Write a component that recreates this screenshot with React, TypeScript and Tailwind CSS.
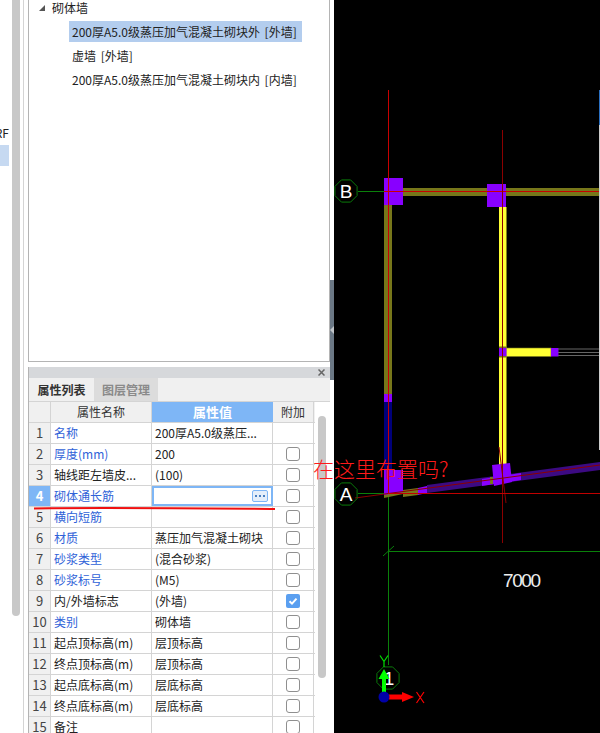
const cjk = "font-['Noto_Sans_CJK_SC','Noto_Sans','Liberation_Sans',sans-serif]"

const rows = [
  { no: 1, name: '名称', value: '200厚A5.0级蒸压...', link: true, box: 'none' },
  { no: 2, name: '厚度(mm)', value: '200', link: true, box: 'off' },
  { no: 3, name: '轴线距左墙皮...', value: '(100)', link: false, box: 'off' },
  { no: 4, name: '砌体通长筋', value: '', link: true, box: 'off', active: true },
  { no: 5, name: '横向短筋', value: '', link: true, box: 'off' },
  { no: 6, name: '材质', value: '蒸压加气混凝土砌块', link: true, box: 'off' },
  { no: 7, name: '砂浆类型', value: '(混合砂浆)', link: true, box: 'off' },
  { no: 8, name: '砂浆标号', value: '(M5)', link: true, box: 'off' },
  { no: 9, name: '内/外墙标志', value: '(外墙)', link: false, box: 'on' },
  { no: 10, name: '类别', value: '砌体墙', link: true, box: 'off' },
  { no: 11, name: '起点顶标高(m)', value: '层顶标高', link: false, box: 'off' },
  { no: 12, name: '终点顶标高(m)', value: '层顶标高', link: false, box: 'off' },
  { no: 13, name: '起点底标高(m)', value: '层底标高', link: false, box: 'off' },
  { no: 14, name: '终点底标高(m)', value: '层底标高', link: false, box: 'off' },
  { no: 15, name: '备注', value: '', link: false, box: 'off' },
]

function Row({ row }: { row: (typeof rows)[number] }) {
  return (
    <div className="flex h-[21px] shrink-0 border-b border-[#d4d4d4] text-[12px] leading-[20px]">
      <div
        className={`w-[22px] shrink-0 border-r border-[#d4d4d4] text-center text-[13px] ${
          row.active ? 'bg-[#7eb6f6] font-bold text-white' : 'bg-[#f0f0f0] text-[#444]'
        }`}
      >
        {row.no}
      </div>
      <div className={`w-[101px] shrink-0 border-r border-[#d4d4d4] pl-[3px] ${row.link ? 'text-[#2f62d8]' : 'text-[#222]'}`}>
        {row.name}
      </div>
      {row.active ? (
        <div className="flex w-[121px] shrink-0 items-center justify-end border-2 border-[#7eb6f6] pr-[3px]">
          <div className="flex h-[12px] w-[16px] items-center justify-center gap-[2px] rounded-[2px] border border-[#7eb6f6] bg-[#e4eefa]">
            <div className="h-[2px] w-[2px] bg-[#4a7fc0]" />
            <div className="h-[2px] w-[2px] bg-[#4a7fc0]" />
            <div className="h-[2px] w-[2px] bg-[#4a7fc0]" />
          </div>
        </div>
      ) : (
        <div className="w-[121px] shrink-0 truncate border-r border-[#d4d4d4] pl-[3px] text-[#222]">{row.value}</div>
      )}
      <div className="flex w-[41px] shrink-0 items-center justify-center border-r border-[#d4d4d4]">
        {row.box === 'off' && <div className="h-[14px] w-[14px] rounded-[3px] border border-[#8f8f8f] bg-white" />}
        {row.box === 'on' && (
          <div className="flex h-[14px] w-[14px] items-center justify-center rounded-[2px] bg-[#5a9ff0]">
            <svg width="10" height="10" viewBox="0 0 10 10" fill="none" stroke="white" strokeWidth="2">
              <path d="M1.5 5.2 4 7.6 8.5 2.6" />
            </svg>
          </div>
        )}
      </div>
    </div>
  )
}

function Octagon({ cx, cy }: { cx: number; cy: number }) {
  const r = 12
  const pts = Array.from({ length: 8 }, (_, i) => {
    const a = (Math.PI / 4) * i + Math.PI / 8
    return `${cx + r * Math.cos(a)},${cy + r * Math.sin(a)}`
  }).join(' ')
  return <polygon points={pts} fill="none" stroke="#0a7a0a" strokeWidth="1" />
}

// drawn in page coordinates, the canvas starts at x=334
function CadDrawing() {
  return (
    <svg width="266" height="733" viewBox="334 0 266 733" className="block">
      {/* axis lines */}
      <path d="M358 191.5H384M358 493.5H388M388.500 493V665M388 551.5H600M383 556 394 546" stroke="#0a800a" fill="none" />
      {/* top wall */}
      <rect x="403" y="188" width="197" height="8" fill="#77771a" />
      {/* left wall */}
      <rect x="384" y="205" width="8" height="189" fill="#77771a" />
      <rect x="384" y="394" width="8" height="8" fill="#8800ff" />
      <rect x="384" y="402" width="8" height="68" fill="#00007a" />
      {/* yellow wall */}
      <rect x="499" y="207" width="7.5" height="258" fill="#ffff33" />
      <rect x="506" y="348" width="45" height="8.5" fill="#ffff33" stroke="#77771a" strokeWidth="0.6" />
      <rect x="499" y="346.5" width="7.5" height="1.5" fill="#77771a" />
      <rect x="499" y="356" width="7.5" height="1.5" fill="#77771a" />
      <rect x="499" y="348" width="7.5" height="8" fill="#8800ff" />
      <rect x="551" y="348" width="7.5" height="8.5" fill="#8800ff" />
      <path d="M558 349H600M558 352.5H600M558 355.5H600" stroke="#666" fill="none" />
      {/* sloped wall */}
      <polygon points="427,485 600,462 600,470 427,493" fill="#3c0a82" />
      <polygon points="403,490 418,488 418,495 403,497" fill="#77771a" />
      <polygon points="418,488 427,486 427,493 418,495" fill="#8800ff" />
      <polygon points="482,479 521,473 521,480 482,486" fill="#8800ff" />
      <rect x="490" y="477" width="3" height="7" fill="#77771a" />
      {/* columns */}
      <rect x="384" y="178" width="19" height="27" fill="#8800ff" />
      <rect x="487" y="184" width="19" height="23" fill="#8800ff" />
      <polygon points="384,470 403,470 403,493 384,497" fill="#8800ff" />
      <polygon points="384,495 403,492 403,494 384,498" fill="#77771a" />
      <polygon points="492,465 510,463 512,482 494,486" fill="#8800ff" />
      {/* centre lines */}
      <path d="M388.500 90V493M384 191.500H600" stroke="#c80000" fill="none" />
      <path d="M502.500 130V543M499 447 506 503M355 498 600 465" stroke="#8b0000" fill="none" />
      <path d="M388 493.500H600" stroke="#c00000" fill="none" />
      {/* window edge behind the canvas */}
      <rect x="599" y="90" width="1" height="35" fill="#2a6fc0" />
      <rect x="599" y="125" width="1" height="325" fill="#ccc" />
      {/* axis bubbles */}
      <Octagon cx={346} cy={191} />
      <Octagon cx={346} cy={494} />
      <Octagon cx={388} cy={678} />
      <text x="346" y="198" textAnchor="middle" fontSize="19" fill="#fff" fontFamily="Liberation Sans, sans-serif">B</text>
      <text x="346" y="501" textAnchor="middle" fontSize="19" fill="#fff" fontFamily="Liberation Sans, sans-serif">A</text>
      <text x="389" y="685" textAnchor="middle" fontSize="19" fill="#fff" fontFamily="Liberation Sans, sans-serif">1</text>
      <text x="503" y="587" fontSize="19" fill="#eee" fontFamily="Liberation Sans, sans-serif" textLength="38">7000</text>
      {/* origin */}
      <path d="M384 692V677" stroke="#00ff00" strokeWidth="4" />
      <polygon points="384,669 389.500,679 378.500,679" fill="#00ff00" />
      <path d="M389 697H403" stroke="#ff0000" strokeWidth="5" />
      <polygon points="414,697 402,692 402,702" fill="#ff0000" />
      <circle cx="384" cy="697" r="5.500" fill="#0000a8" />
      <path d="M416.500 692 424 703M424 692 416.500 703" stroke="#ff0000" strokeWidth="1.200" fill="none" />
      <path d="M380 655.500 384 661.500 388 655.500M384 661.500V667" stroke="#00e000" strokeWidth="1.200" fill="none" />
    </svg>
  )
}

export default function App() {
  return (
    <div className={`relative flex h-[733px] w-[600px] overflow-hidden bg-white ${cjk}`}>
      {/* far left tree, cut off by the window edge */}
      <div className="w-[12px] shrink-0 overflow-hidden bg-white">
        <div className="h-[124px]" />
        <div className="flex h-[18px] justify-end pr-[3px] text-[12px] leading-[18px] whitespace-nowrap text-[#222]">
          <span className="shrink-0">RF</span>
        </div>
        <div className="h-[3px]" />
        <div className="h-[21px] w-[9px] bg-[#c6d9f1]" />
      </div>
      <div className="h-[616px] w-[8px] shrink-0 rounded-b-[4px] bg-[#c8c8c8]" />
      <div className="w-[3px] shrink-0" />
      <div className="w-[1px] shrink-0 bg-[#d4d4d4]" />
      <div className="w-[4px] shrink-0" />

      {/* middle column */}
      <div className="flex w-[302px] shrink-0 flex-col">
        {/* wall tree */}
        <div className="h-[362px] shrink-0 border-r border-b border-l border-[#b4b4b4] bg-white text-[12px] text-[#222] [word-spacing:2px]">
          <div className="flex h-[15px] items-center pl-[10px] leading-[15px]">
            <svg width="6" height="6" viewBox="0 0 6 6" className="mr-[7px]">
              <polygon points="6,0 6,6 0,6" fill="#555" />
            </svg>
            砌体墙
          </div>
          <div className="mt-[6px] ml-[40px] flex h-[21px] w-[233px] items-center bg-[#b3cdee] pl-[3px] whitespace-nowrap">
            200厚A5.0级蒸压加气混凝土砌块外 [外墙]
          </div>
          <div className="mt-[3px] ml-[40px] flex h-[21px] items-center pl-[3px] whitespace-nowrap">虚墙 [外墙]</div>
          <div className="mt-[3px] ml-[40px] flex h-[21px] items-center pl-[3px] whitespace-nowrap">
            200厚A5.0级蒸压加气混凝土砌块内 [内墙]
          </div>
        </div>
        <div className="h-[5px] shrink-0" />
        {/* properties */}
        <div className="flex min-h-0 flex-1 flex-col border-l border-[#b4b4b4]">
          <div className="flex h-[11px] shrink-0 items-center justify-end bg-[#d6d8db] pr-[5px]">
            <svg width="7" height="7" viewBox="0 0 7 7" stroke="#666" strokeWidth="1.500">
              <path d="M.5.500 6.500 6.500M6.500.500.500 6.500" />
            </svg>
          </div>
          <div className="flex h-[24px] shrink-0 border-b border-[#d4d4d4] bg-[#f0f0f0] text-[12px] leading-[23px]">
            <div className="w-[65px] text-center font-bold text-[#333]">属性列表</div>
            <div className="w-[64px] bg-[#dcdcdc] text-center font-bold text-[#8a8a8a]">图层管理</div>
          </div>
          <div className="flex min-h-0 flex-1">
            <div className="flex w-[286px] shrink-0 flex-col">
              <div className="flex h-[21px] shrink-0 border-b border-[#d4d4d4] bg-[#f0f0f0] text-center text-[12px] leading-[20px] text-[#333]">
                <div className="w-[22px] shrink-0 border-r border-[#d4d4d4]" />
                <div className="w-[101px] shrink-0 border-r border-[#d4d4d4]">属性名称</div>
                <div className="w-[121px] shrink-0 bg-[#7eb6f6] text-[13px] font-bold text-white">属性值</div>
                <div className="w-[41px] shrink-0 border-r border-[#d4d4d4]">附加</div>
              </div>
              {rows.map((row) => (
                <Row key={row.no} row={row} />
              ))}
            </div>
            <div className="flex-1 bg-white pt-[14px] pl-[3px]">
              <div className="h-[262px] w-[8px] rounded-[4px] bg-[#c8c8c8]" />
            </div>
          </div>
        </div>
      </div>

      {/* splitter */}
      <div className="flex w-[4px] shrink-0 flex-col">
        <div className="h-[280px]" />
        <div className="flex h-[100px] items-center bg-[#6b7885]">
          <svg width="4" height="8" viewBox="0 0 4 8">
            <polygon points="0,4 4,0 4,8" fill="#c0c4c8" />
          </svg>
        </div>
      </div>

      <div className="flex-1 bg-black">
        <CadDrawing />
      </div>

      {/* annotation drawn over the screenshot */}
      <div className="absolute top-[453px] left-[313px] text-[21px] leading-[30px] font-light whitespace-nowrap text-[#ff1a1a]">
        在这里布置吗?
      </div>
      <svg width="260" height="8" viewBox="0 0 260 8" className="absolute top-[504px] left-[30px]">
        <path d="M4 4.500C80 3.500 180 4.500 245 5" stroke="#f01010" strokeWidth="2" fill="none" />
      </svg>
    </div>
  )
}
